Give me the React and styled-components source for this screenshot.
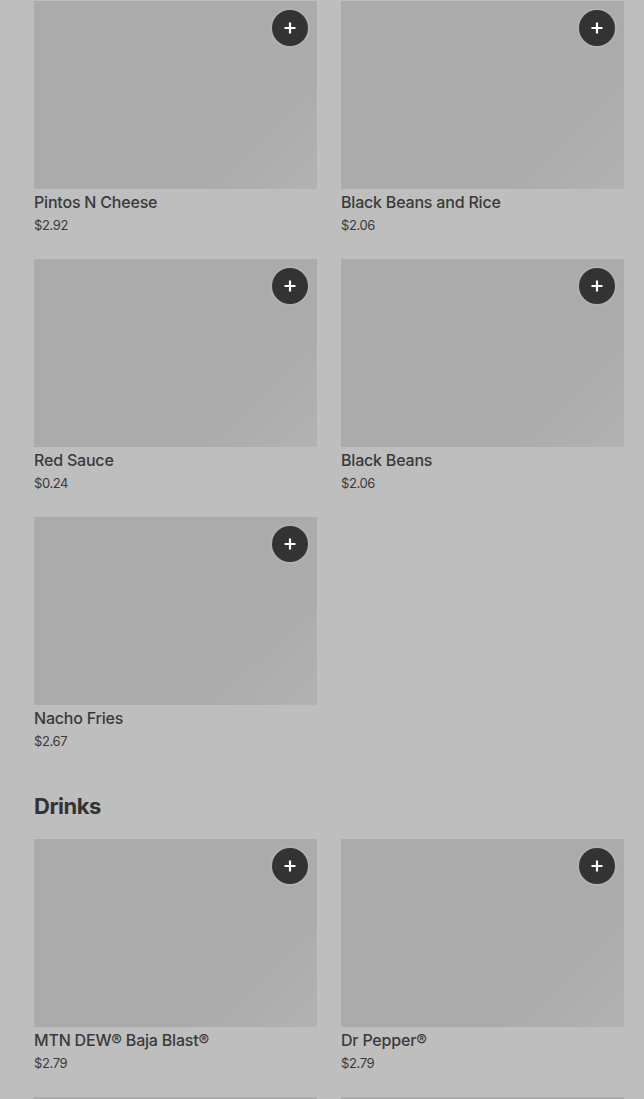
import styled, { createGlobalStyle } from "styled-components";

const GlobalStyle = createGlobalStyle`
  html, body {
    margin: 0;
    background: #bebebe;
    font-family: Inter, "Noto Sans", sans-serif;
    color: #333;
  }
`;

const sides = [
  { id: 1, name: "Pintos N Cheese", price: 2.92 },
  { id: 2, name: "Black Beans and Rice", price: 2.06 },
  { id: 3, name: "Red Sauce", price: 0.24 },
  { id: 4, name: "Black Beans", price: 2.06 },
  { id: 5, name: "Nacho Fries", price: 2.67 },
];

const drinks = [
  { id: 6, name: "MTN DEW® Baja Blast®", price: 2.79 },
  { id: 7, name: "Dr Pepper®", price: 2.79 },
  { id: 8, name: "Pepsi®", price: 2.79 },
  { id: 9, name: "Diet Pepsi®", price: 2.79 },
];

const PlusIcon = () => (
  <svg width="14" height="14" viewBox="0 0 14 14" fill="none">
    <path d="M7 1.5v11M1.5 7h11" stroke="#fff" strokeWidth="2.2" />
  </svg>
);

function ItemCard({ item }) {
  return (
    <Card>
      <Thumb>
        <AddButton aria-label={`Add ${item.name}`}>
          <PlusIcon />
        </AddButton>
      </Thumb>
      <Name>{item.name}</Name>
      <Price>${item.price.toFixed(2)}</Price>
    </Card>
  );
}

export default function App() {
  return (
    <>
      <GlobalStyle />
      <Page>
        <Section>
          <Grid>
            {sides.map((item) => <ItemCard key={item.id} item={item} />)}
          </Grid>
        </Section>
        <Section>
          <Heading>Drinks</Heading>
          <Grid>
            {drinks.map((item) => <ItemCard key={item.id} item={item} />)}
          </Grid>
        </Section>
      </Page>
    </>
  );
}

const Page = styled.div`
  padding: 1px 20px 40px 34px;
  display: flex;
  flex-direction: column;
  gap: 39px;
`;

const Section = styled.section`
  display: flex;
  flex-direction: column;
`;

const Heading = styled.h2`
  margin: 0 0 17px;
  font-size: 22px;
  line-height: 32px;
  font-weight: 700;
  letter-spacing: -0.5px;
  color: #333;
`;

const Grid = styled.div`
  display: grid;
  grid-template-columns: 283px 283px;
  column-gap: 24px;
  row-gap: 24px;
`;

const Card = styled.div`
  display: flex;
  flex-direction: column;
`;

const Thumb = styled.div`
  position: relative;
  height: 188px;
  background: linear-gradient(135deg, #ababab 0%, #ababab 72%, #b2b2b2 100%);
`;

const AddButton = styled.button`
  position: absolute;
  top: 9px;
  right: 9px;
  width: 36px;
  height: 36px;
  border: none;
  border-radius: 50%;
  background: #333;
  box-shadow: 0 0 0 2px rgba(255, 255, 255, 0.08);
  display: flex;
  align-items: center;
  justify-content: center;
  padding: 0;
  cursor: pointer;
`;

const Name = styled.div`
  margin-top: 3px;
  font-size: 16px;
  line-height: 20px;
  font-weight: 500;
  letter-spacing: -0.2px;
  color: #3a3a3a;
`;

const Price = styled.div`
  margin-top: 3px;
  font-size: 13px;
  line-height: 20px;
  color: #3a3a3a;
  letter-spacing: -0.4px;
`;
